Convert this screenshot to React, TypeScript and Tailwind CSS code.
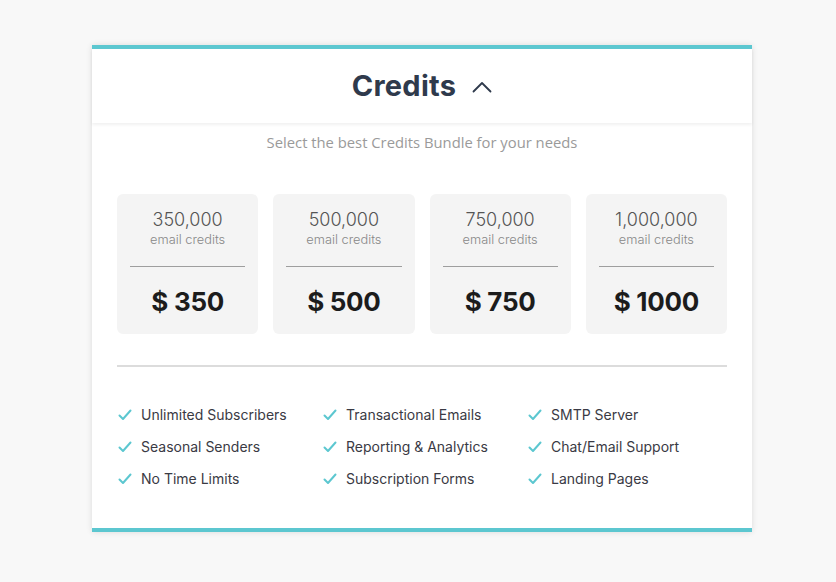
import React from 'react';

const bundles = [
  { credits: '350,000', price: '$ 350' },
  { credits: '500,000', price: '$ 500' },
  { credits: '750,000', price: '$ 750' },
  { credits: '1,000,000', price: '$ 1000' },
];

const features = [
  'Unlimited Subscribers',
  'Transactional Emails',
  'SMTP Server',
  'Seasonal Senders',
  'Reporting & Analytics',
  'Chat/Email Support',
  'No Time Limits',
  'Subscription Forms',
  'Landing Pages',
];

const Check = () => (
  <svg width="14" height="12" viewBox="0 0 14 12" fill="none" className="shrink-0">
    <path d="M1.5 6.5 L5 10 L12.5 1.5" stroke="#5cc7d0" strokeWidth="2" strokeLinecap="round" strokeLinejoin="round" />
  </svg>
);

const App: React.FC = () => {
  return (
    <div className="min-h-[582px] w-full bg-[#f8f8f8] pt-[45px] font-['Inter',sans-serif]">
      <div className="ml-[92px] w-[660px] bg-white border-t-4 border-b-4 border-[#5cc7d0] shadow-[0_0_6px_rgba(0,0,0,0.12)]">
        {/* Header */}
        <div className="h-[74px] flex items-center justify-center gap-4 shadow-[0_2px_3px_rgba(0,0,0,0.06)]">
          <h1 className="text-[29px] font-bold text-[#2f3a4c] tracking-[0.3px]">Credits</h1>
          <svg width="20" height="12" viewBox="0 0 20 12" fill="none" className="mt-[2px]">
            <path d="M1.5 10.5 L10 2 L18.5 10.5" stroke="#2f3a4c" strokeWidth="1.8" strokeLinecap="round" strokeLinejoin="round" />
          </svg>
        </div>

        <div className="px-[25px] pt-[8px] pb-[40px]">
          <p className="text-center text-[14.8px] text-[#9a9a9a] font-['Open_Sans',sans-serif]">
            Select the best Credits Bundle for your needs
          </p>

          {/* Bundles */}
          <div className="grid grid-cols-4 gap-[15px] mt-[41px]">
            {bundles.map((b) => (
              <div key={b.credits} className="h-[140px] bg-[#f4f4f4] rounded-md px-[13px] pt-[15px] flex flex-col items-center">
                <div className="text-[18px] font-light text-[#555] leading-[22px]">{b.credits}</div>
                <div className="text-[12.8px] font-light text-[#888] leading-[16px] mt-[1px]">email credits</div>
                <div className="w-full h-px bg-[#9e9e9e] mt-[18px]" />
                <div className="text-[26px] font-bold text-[#1c1c1c] mt-[20px] leading-[30px] tracking-[-0.3px]">{b.price}</div>
              </div>
            ))}
          </div>

          <div className="h-[2px] bg-[#dcdcdc] mt-[31px]" />

          {/* Features */}
          <div className="grid grid-cols-[205px_205px_1fr] gap-y-[13px] mt-[38px]">
            {features.map((f) => (
              <div key={f} className="flex items-center gap-[9px] pl-[1px] h-[19px]">
                <Check />
                <span className="text-[14px] text-[#3a3a44]">{f}</span>
              </div>
            ))}
          </div>
        </div>
      </div>
    </div>
  );
};

export default App;
